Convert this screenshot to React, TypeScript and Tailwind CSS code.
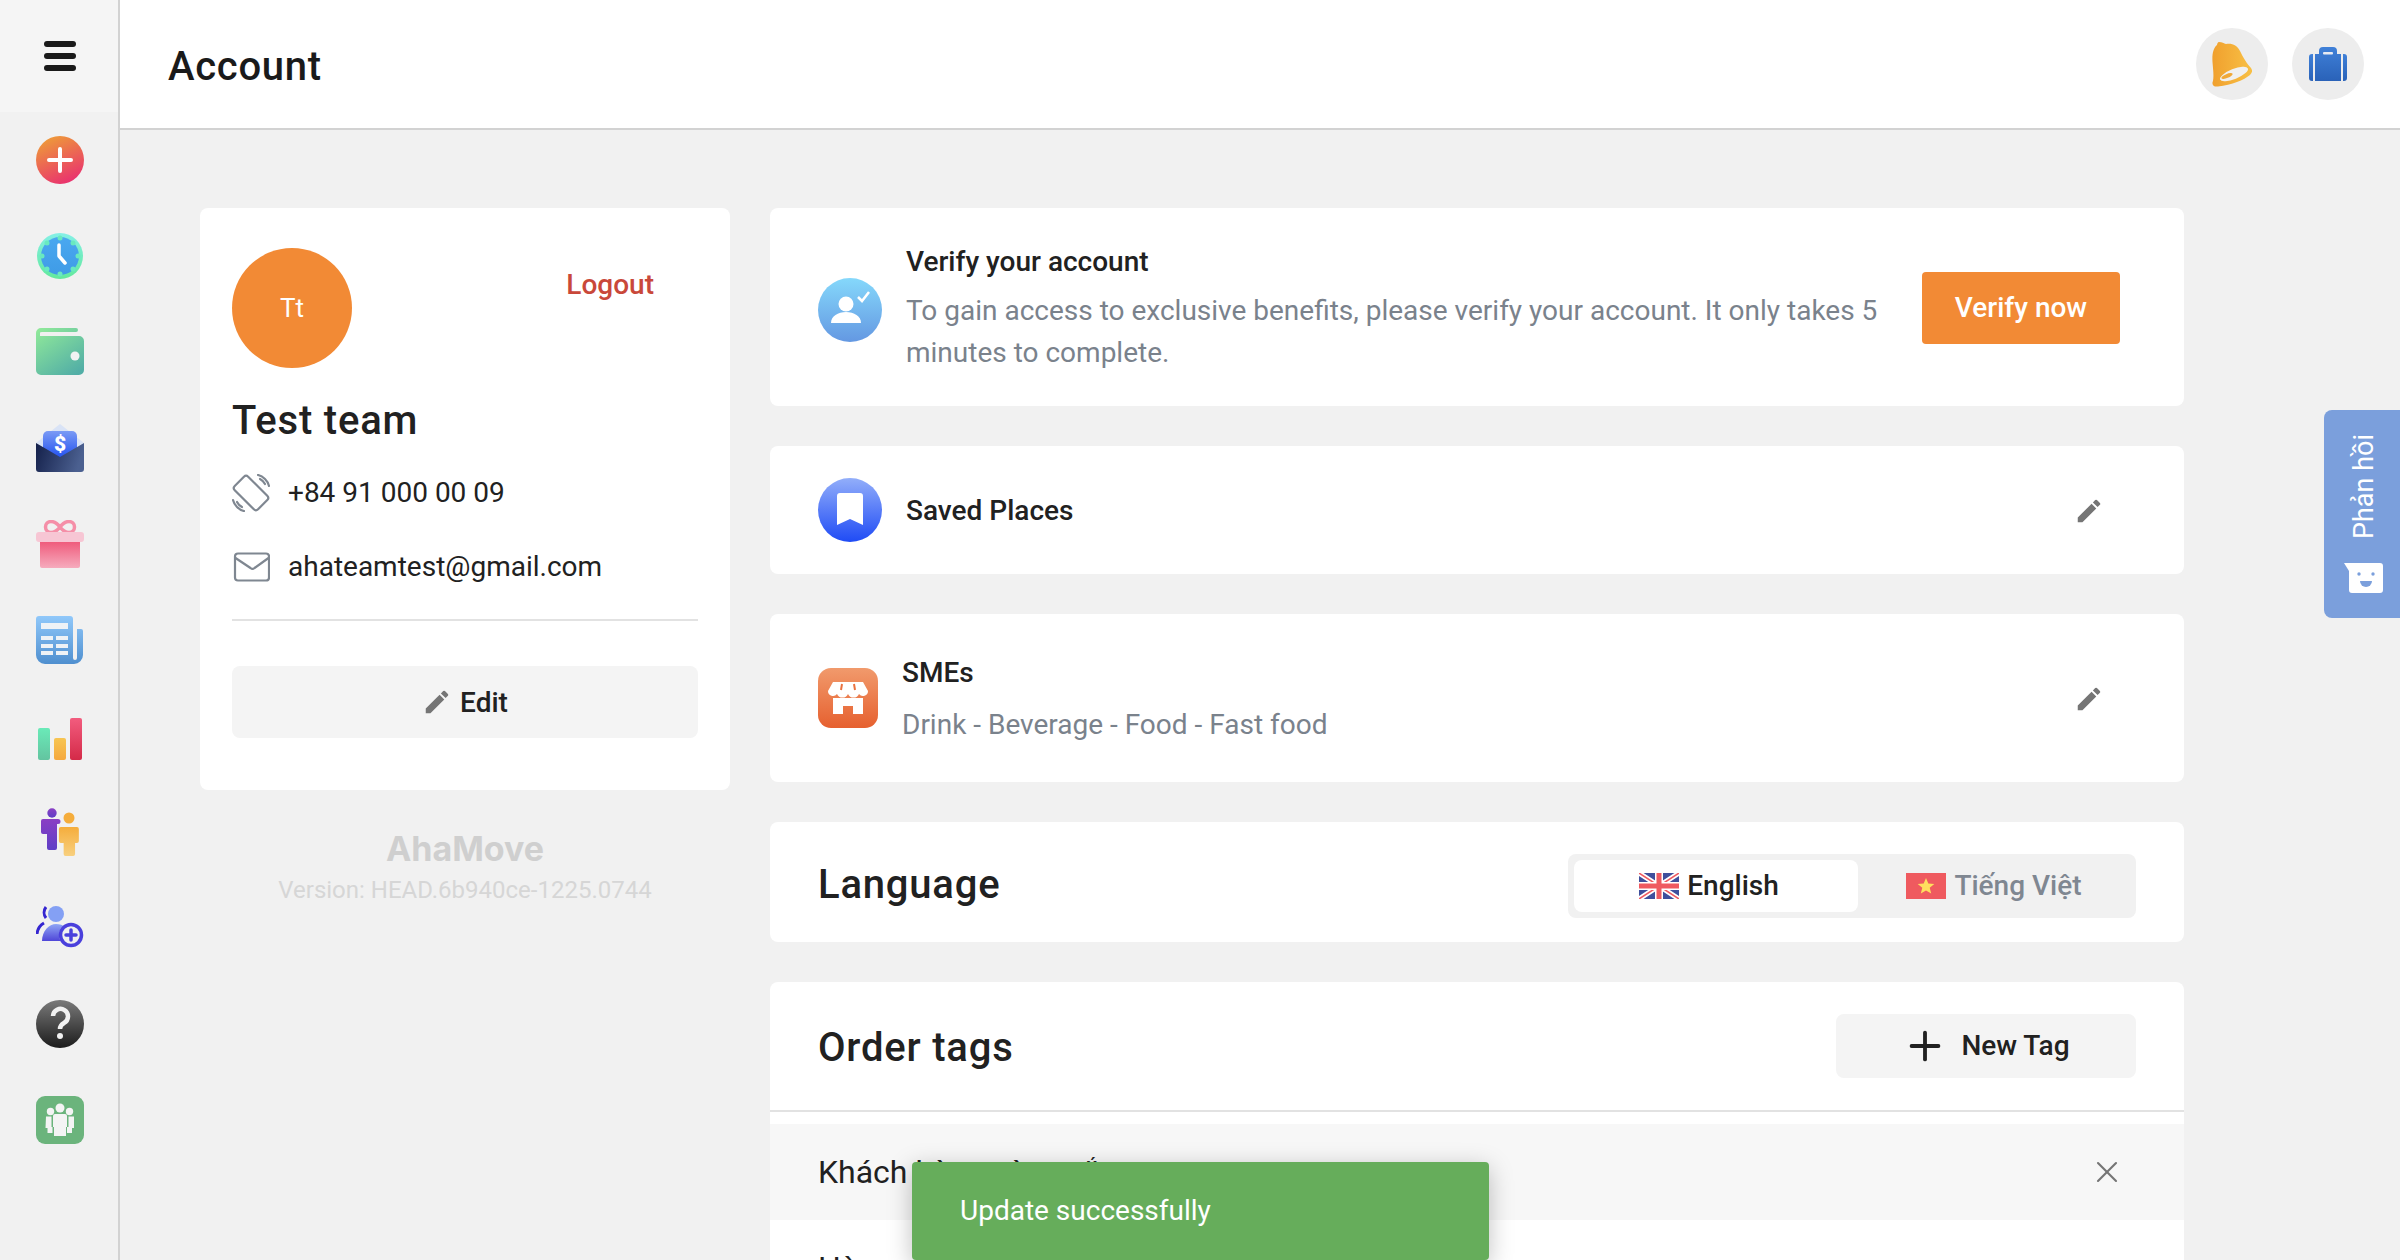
import React from 'react';
import { Plus, X } from 'lucide-react';

const Pencil: React.FC<{ className?: string }> = ({ className }) => (
  <svg viewBox="0 0 24 24" className={className} fill="#757575">
    <path d="M3 17.25V21h3.75L17.81 9.94l-3.75-3.75L3 17.25zM20.71 7.04a1 1 0 0 0 0-1.41l-2.34-2.34a1 1 0 0 0-1.41 0l-1.83 1.83 3.75 3.75 1.83-1.83z" />
  </svg>
);

const Grad: React.FC<{ id: string; from: string; to: string; x2?: number; y2?: number; x1?: number }> = ({
  id,
  from,
  to,
  x1 = 0,
  x2 = 0,
  y2 = 1,
}) => (
  <linearGradient id={id} x1={x1} y1="0" x2={x2} y2={y2}>
    <stop offset="0" stopColor={from} />
    <stop offset="1" stopColor={to} />
  </linearGradient>
);

const sidebarIcons: React.ReactNode[] = [
  <>
    <Grad id="s1" from="#ee9c38" to="#e92f70" x1={0.25} x2={0.7} />
    <circle cx="24" cy="24" r="24" fill="url(#s1)" />
    <path d="M24 13v22M13 24h22" stroke="#fff" strokeWidth="4" strokeLinecap="round" />
  </>,
  <>
    <Grad id="s2a" from="#85f0e6" to="#62e99c" />
    <Grad id="s2b" from="#4aa8f0" to="#3f9be6" />
    <circle cx="24" cy="24" r="23" fill="url(#s2a)" />
    <circle cx="24" cy="24" r="19" fill="url(#s2b)" />
    <g fill="#69e9c0">
      <circle cx="24" cy="6" r="2.5" />
      <circle cx="24" cy="42" r="2.5" />
      <circle cx="6" cy="24" r="2.5" />
      <circle cx="42" cy="24" r="2.5" />
      <circle cx="11" cy="11" r="2.5" />
      <circle cx="37" cy="11" r="2.5" />
      <circle cx="11" cy="37" r="2.5" />
      <circle cx="37" cy="37" r="2.5" />
    </g>
    <path d="M23 13v11l6 7" stroke="#fff" strokeWidth="3.5" strokeLinecap="round" strokeLinejoin="round" fill="none" />
  </>,
  <>
    <Grad id="s3" from="#8fe89a" to="#52aea6" x1={0.1} x2={0.8} />
    <path d="M0 5a5 5 0 0 1 5-5h35a2 2 0 0 1 0 4H6a2 2 0 0 0-2 2v2h39a5 5 0 0 1 5 5v29a5 5 0 0 1-5 5H5a5 5 0 0 1-5-5z" fill="url(#s3)" />
    <path d="M4 4.500h36v3.500H4z" fill="#f0f0f0" />
    <circle cx="39" cy="28" r="4.500" fill="#f2f2f2" />
  </>,
  <>
    <Grad id="s4a" from="#7b9bf5" to="#1f4ff0" />
    <Grad id="s4b" from="#14204a" to="#4b6090" x2={1} y2={0.2} />
    <path d="M0 19 24 0l24 19-24 16z" fill="#d9e3f6" />
    <rect x="7" y="7" width="34" height="28" rx="5" fill="url(#s4a)" />
    <path d="M0 19l24 14 24-14v26a3 3 0 0 1-3 3H3a3 3 0 0 1-3-3z" fill="url(#s4b)" />
    <text x="24" y="27" textAnchor="middle" fontFamily="Roboto, sans-serif" fontWeight="900" fontSize="21" fill="#fff">$</text>
  </>,
  <>
    <Grad id="s5" from="#ef5c7c" to="#f6abbd" />
    <path d="M24 7c-3-4-6-5.500-9-5.500a5.500 5.500 0 0 0 0 11c3 0 6-1.500 9-5.500 3 4 6 5.500 9 5.500a5.500 5.500 0 0 0 0-11c-3 0-6 1.500-9 5.500z" fill="none" stroke="#f58fa8" strokeWidth="3.500" />
    <rect x="0" y="12" width="48" height="10" rx="3" fill="#f7c6d4" />
    <path d="M4 22h40v24a2 2 0 0 1-2 2H6a2 2 0 0 1-2-2z" fill="url(#s5)" />
  </>,
  <>
    <Grad id="s6" from="#90c8fa" to="#4f8fcf" />
    <path d="M3 0h31a3 3 0 0 1 3 3v39a2 2 0 0 0 4 0V13h4a2 2 0 0 1 2 2v24a9 9 0 0 1-9 9H9a9 9 0 0 1-9-9V3a3 3 0 0 1 3-3z" fill="url(#s6)" />
    <g fill="#eef2f6">
      <rect x="5" y="7" width="27" height="6" />
      <rect x="5" y="20" width="12" height="4" />
      <rect x="20" y="20" width="12" height="4" />
      <rect x="5" y="28" width="12" height="4" />
      <rect x="20" y="28" width="12" height="4" />
      <rect x="5" y="35" width="12" height="4" />
      <rect x="20" y="35" width="12" height="4" />
    </g>
  </>,
  <>
    <Grad id="s7a" from="#6aeab8" to="#63c4a0" />
    <Grad id="s7b" from="#f7c552" to="#f5a83e" />
    <Grad id="s7c" from="#f25c7e" to="#d42a48" />
    <rect x="2" y="16" width="12" height="32" rx="2" fill="url(#s7a)" />
    <rect x="18" y="26" width="12" height="22" rx="2" fill="url(#s7b)" />
    <rect x="34" y="6" width="12" height="42" rx="2" fill="url(#s7c)" />
  </>,
  <>
    <Grad id="s8a" from="#8a3fc4" to="#5f3ec6" />
    <Grad id="s8b" from="#f5ad3c" to="#f8d07f" />
    <circle cx="16" cy="5" r="4.700" fill="url(#s8a)" />
    <path d="M7 11h15a2 2 0 0 1 0 5h-1v24a2 2 0 0 1-2 2h-6a2 2 0 0 1-2-2V26H7a2 2 0 0 1-2-2V13a2 2 0 0 1 2-2z" fill="url(#s8a)" />
    <circle cx="33" cy="10" r="5.500" fill="#f5ad3c" />
    <path d="M24 19h17a2 2 0 0 1 2 2v12a2 2 0 0 1-2 2h-2v11a2 2 0 0 1-2 2h-8a2 2 0 0 1-2-2V35h-3a2 2 0 0 1-2-2V21a2 2 0 0 1 2-2z" fill="url(#s8b)" transform="translate(2 0) scale(.95 1)" />
  </>,
  <>
    <Grad id="s9a" from="#8fa6f5" to="#4f46d8" />
    <circle cx="20" cy="10" r="8" fill="#84a0f4" />
    <path d="M10 3a9 9 0 0 0 0 11" stroke="#3526d0" strokeWidth="3" fill="none" />
    <path d="M8 19a14 14 0 0 0-7 11" stroke="#3526d0" strokeWidth="3" fill="none" />
    <path d="M6 37c0-10 7-17 14-17 7 0 14 4 14 17z" fill="url(#s9a)" />
    <circle cx="35" cy="31" r="12" fill="#f0f0f0" />
    <circle cx="35" cy="31" r="10.500" fill="none" stroke="#4a40dc" strokeWidth="3.500" />
    <path d="M35 26v10M30 31h10" stroke="#4a40dc" strokeWidth="3.500" strokeLinecap="round" />
  </>,
  <>
    <Grad id="s10" from="#7a7a7a" to="#1c1c1c" />
    <circle cx="24" cy="24" r="24" fill="url(#s10)" />
    <path d="M17 16a7.500 7.500 0 1 1 11 7c-2.500 1.400-4 2.800-4 6" stroke="#f2f2f2" strokeWidth="4.500" fill="none" />
    <circle cx="24" cy="36" r="3" fill="#f2f2f2" />
  </>,
  <>
    <rect width="48" height="48" rx="9" fill="#6bb47c" />
    <g fill="#f4f4f4">
      <circle cx="24" cy="12" r="4.500" />
      <circle cx="14.500" cy="15.500" r="3.700" />
      <circle cx="33.500" cy="15.500" r="3.700" />
      <path d="M19 18h10a2 2 0 0 1 2 2v11h-1v9H18v-9h-1V20a2 2 0 0 1 2-2z" />
      <path d="M10 20.500h5.500V31h1v6h-5v-5h-2z" />
      <path d="M32.500 20.500H38V32h-2v5h-5v-6h1.500z" />
    </g>
  </>,
];

const Sidebar = () => (
  <div className="w-[120px] shrink-0 border-r-2 border-[#d2d2d2] bg-[#f1f1f1]">
    <div className="h-[112px] bg-[#f5f5f5] flex flex-col items-center justify-center gap-[6px] pl-[2px]">
      <div className="w-[32px] h-[6px] rounded-full bg-[#1a1a1a]" />
      <div className="w-[32px] h-[6px] rounded-full bg-[#1a1a1a]" />
      <div className="w-[32px] h-[6px] rounded-full bg-[#1a1a1a]" />
    </div>
    {sidebarIcons.map((icon, i) => (
      <div key={i} className="h-[96px] flex items-center justify-center pl-[2px]">
        <svg viewBox="0 0 48 48" className="w-[48px] h-[48px]">
          {icon}
        </svg>
      </div>
    ))}
  </div>
);

const Header = () => (
  <div className="h-[130px] shrink-0 bg-white border-b-2 border-[#d2d2d2] flex items-center justify-between pl-[48px] pr-[36px]">
    <h1 className="text-[40px] font-medium tracking-[0.7px] text-[#1a1a1a] mt-[6px]">Account</h1>
    <div className="flex gap-[24px]">
      <div className="w-[72px] h-[72px] rounded-full bg-[#ededed] flex items-center justify-center">
        <svg viewBox="0 0 40 45" className="w-[40px] h-[45px]">
          <Grad id="bell" from="#f0a02e" to="#f8c045" x2={1} y2={0} />
          <path d="M7 0C10 0 12 1.500 14 2C20 1 25 3 28 9C31 15 35 22 39 26C41 29 40 31 38 33C32 38 20 43 6 44.500C1 45-.5 42 1 39C2 33 1 27 .5 20C0 13 1 6 5 3C5 1.500 6 0 7 0z" fill="url(#bell)" />
          <ellipse cx="22" cy="32" rx="15" ry="5" transform="rotate(-22 22 32)" fill="#f0f0f0" />
          <ellipse cx="15" cy="34" rx="6" ry="2" transform="rotate(-22 15 34)" fill="#f0a838" />
        </svg>
      </div>
      <div className="w-[72px] h-[72px] rounded-full bg-[#ededed] flex items-center justify-center">
        <svg viewBox="0 0 38 34" className="w-[38px] h-[34px]">
          <Grad id="bag" from="#3f80d8" to="#2a62b8" />
          <path d="M10 7V4a4 4 0 0 1 4-4h10a4 4 0 0 1 4 4v3h4v27H6V7z" fill="url(#bag)" />
          <rect x="14" y="5" width="10" height="2.500" rx="1" fill="#e6eaf2" />
          <path d="M3 7h1v27H3a3 3 0 0 1-3-3V10a3 3 0 0 1 3-3zM34 7h1a3 3 0 0 1 3 3v21a3 3 0 0 1-3 3h-1z" fill="url(#bag)" />
        </svg>
      </div>
    </div>
  </div>
);

const ProfileCard = () => (
  <div className="w-[530px] shrink-0">
    <div className="bg-white rounded-lg h-[582px] px-[32px] pt-[40px]">
      <div className="flex justify-between">
        <div className="w-[120px] h-[120px] rounded-full bg-[#f28a35] flex items-center justify-center text-white text-[26px]">
          Tt
        </div>
        <span className="text-[28px] font-medium text-[#c9483a] mr-[44px] mt-[16px] leading-[42px]">Logout</span>
      </div>
      <h2 className="mt-[32px] text-[40px] leading-[42px] font-medium tracking-[0.8px] text-[#212121]">Test team</h2>
      <div className="mt-[31px] flex items-center gap-[18px] h-[40px] text-[28px] text-[#212121]">
        <svg viewBox="0 0 38 38" className="w-[38px] h-[38px]" fill="none" stroke="#7f8791" strokeWidth="2.200" strokeLinecap="round">
          <rect x="9.500" y="2.500" width="19" height="33" rx="3" transform="rotate(-45 19 19)" />
          <path d="M26 1c5 1 10 6 11 11M28 5c2 1 4 3 5 5M1 26c1 5 6 10 11 11M5 28c1 2 3 4 5 5" />
        </svg>
        <span>+84 91 000 00 09</span>
      </div>
      <div className="mt-[34px] flex items-center gap-[18px] h-[40px] text-[28px] text-[#212121]">
        <svg viewBox="0 0 38 30" className="w-[38px] h-[30px]" fill="none" stroke="#7f8791" strokeWidth="2.200" strokeLinejoin="round">
          <rect x="3" y="1.500" width="34" height="27" rx="3" />
          <path d="M3.500 6l15 10a3 3 0 0 0 4 0l14-10" />
        </svg>
        <span>ahateamtest@gmail.com</span>
      </div>
      <div className="mt-[32px] border-t-2 border-[#e2e2e2]" />
      <div className="mt-[45px] h-[72px] rounded-lg bg-[#f4f4f4] flex items-center justify-center gap-[8px] text-[28px] font-medium text-[#212121]">
        <Pencil className="w-[30px] h-[30px]" />
        <span className="mt-[1px]">Edit</span>
      </div>
    </div>
    <div className="mt-[40px] text-center text-[34px] leading-[38px] font-bold text-[#cfcfcf] [font-family:Inter,sans-serif]">
      AhaMove
    </div>
    <div className="mt-[6px] text-center text-[24px] leading-[32px] text-[#d6d6d6]">Version: HEAD.6b940ce-1225.0744</div>
  </div>
);

const UkFlag = () => (
  <svg viewBox="0 0 40 26" className="w-[40px] h-[26px]">
    <rect width="40" height="26" fill="#3f4f9c" />
    <path d="M0 0l40 26M40 0L0 26" stroke="#fff" strokeWidth="5" />
    <path d="M0 0l40 26M40 0L0 26" stroke="#ef5a60" strokeWidth="1.500" />
    <path d="M20 0v26M0 13h40" stroke="#fff" strokeWidth="8" />
    <path d="M20 0v26M0 13h40" stroke="#ef5a60" strokeWidth="5" />
  </svg>
);

const VnFlag = () => (
  <svg viewBox="0 0 40 26" className="w-[40px] h-[26px]">
    <rect width="40" height="26" fill="#ef5a5f" />
    <path d="M20 5l2.300 5.500 6 .4-4.600 3.800 1.500 5.800-5.200-3.100-5.200 3.100 1.500-5.800-4.600-3.800 6-.4z" fill="#ffdf5e" />
  </svg>
);

const AccountColumn = () => (
  <div className="w-[1414px] shrink-0 flex flex-col gap-[40px]">
    <div className="h-[198px] bg-white rounded-lg flex items-center pl-[48px] pr-[64px] shrink-0">
      <svg viewBox="0 0 64 64" className="w-[64px] h-[64px] shrink-0 mt-[6px]">
        <Grad id="v1" from="#85d8fb" to="#6498e2" />
        <circle cx="32" cy="32" r="32" fill="url(#v1)" />
        <circle cx="28" cy="26" r="7.500" fill="#fff" />
        <path d="M13 45c0-7 7-11 15-11s15 4 15 11z" fill="#fff" />
        <path d="M40 19l4 4 7-9" stroke="#fff" strokeWidth="2.500" fill="none" />
      </svg>
      <div className="ml-[24px] w-[985px] shrink-0">
        <div className="text-[28px] leading-[42px] font-medium text-[#212121]">Verify your account</div>
        <p className="text-[28px] leading-[42px] text-[#7a828c] mt-[7px]">
          To gain access to exclusive benefits, please verify your account. It only takes 5 minutes to complete.
        </p>
      </div>
      <button className="ml-auto w-[198px] h-[72px] rounded bg-[#f28a35] text-white text-[28px] font-medium mt-[2px]">
        Verify now
      </button>
    </div>

    <div className="h-[128px] bg-white rounded-lg flex items-center pl-[48px] pr-[80px] shrink-0">
      <svg viewBox="0 0 64 64" className="w-[64px] h-[64px] shrink-0">
        <Grad id="v2" from="#92aefa" to="#1f4bf5" />
        <circle cx="32" cy="32" r="32" fill="url(#v2)" />
        <path d="M19 18a3 3 0 0 1 3-3h20a3 3 0 0 1 3 3v29l-13-6-13 6z" fill="#fff" />
      </svg>
      <span className="ml-[24px] mt-[2px] text-[28px] font-medium text-[#212121]">Saved Places</span>
      <Pencil className="ml-auto mt-[2px] w-[30px] h-[30px]" />
    </div>

    <div className="h-[168px] bg-white rounded-lg flex items-center pl-[48px] pr-[80px] shrink-0">
      <svg viewBox="0 0 60 60" className="w-[60px] h-[60px] shrink-0">
        <Grad id="v3" from="#f19a6c" to="#e6602f" />
        <rect width="60" height="60" rx="13" fill="url(#v3)" />
        <path d="M15 14h30l5 9a5 5 0 0 1-9 3 6 6 0 0 1-11 0 6 6 0 0 1-11 0 5 5 0 0 1-9-3z" fill="#fff" />
        <path d="M15 30h30v16H35v-8H25v8H15z" fill="#fff" />
        <path d="M24 16l-1 6M36 16l1 6" stroke="#ea7240" strokeWidth="2" />
      </svg>
      <div className="ml-[24px] mt-[2px] text-[28px]">
        <div className="leading-[42px] font-medium text-[#212121]">SMEs</div>
        <div className="leading-[42px] mt-[10px] text-[#7a828c]">Drink - Beverage - Food - Fast food</div>
      </div>
      <Pencil className="ml-auto mt-[1px] w-[30px] h-[30px]" />
    </div>

    <div className="h-[120px] bg-white rounded-lg flex items-center justify-between pl-[48px] pr-[48px] shrink-0">
      <h3 className="text-[40px] font-medium tracking-[0.8px] text-[#212121] mt-[6px]">Language</h3>
      <div className="w-[568px] h-[64px] rounded-lg bg-[#f1f1f1] p-[6px] flex text-[28px] font-medium mt-[8px]">
        <div className="w-[284px] rounded-lg bg-white flex items-center justify-center gap-[8px] pr-[14px] text-[#212121]">
          <UkFlag />
          English
        </div>
        <div className="flex-1 flex items-center justify-center gap-[8px] text-[#7f8791]">
          <VnFlag />
          Tiếng Việt
        </div>
      </div>
    </div>

    <div className="bg-white rounded-t-lg shrink-0">
      <div className="h-[130px] border-b-2 border-[#e2e2e2] flex items-center justify-between pl-[48px] pr-[48px]">
        <h3 className="text-[40px] font-medium tracking-[0.8px] text-[#212121] mt-[3px]">Order tags</h3>
        <div className="w-[300px] h-[64px] rounded-lg bg-[#f4f4f4] flex items-center justify-center gap-[13px] text-[28px] font-medium text-[#212121]">
          <Plus className="w-[46px] h-[46px]" strokeWidth={2} />
          New Tag
        </div>
      </div>
      <div className="mt-[12px] h-[96px] bg-[#f7f7f7] flex items-center justify-between pl-[48px] pr-[59px] text-[32px] text-[#212121]">
        Khách hàng vừa mắn
        <X className="w-[36px] h-[36px] text-[#757575]" strokeWidth={1.4} />
      </div>
      <div className="h-[96px] flex items-center pl-[48px] text-[32px] text-[#212121]">Hàng mới</div>
    </div>
  </div>
);

export default function App() {
  return (
    <div className="relative h-[1260px] overflow-hidden flex bg-[#f1f1f1] [font-family:Roboto,sans-serif]">
      <Sidebar />
      <div className="flex-1 flex flex-col min-w-0">
        <Header />
        <div className="flex gap-[40px] pl-[80px] pt-[78px]">
          <ProfileCard />
          <AccountColumn />
        </div>
      </div>

      {/* feedback tab */}
      <div className="absolute right-0 top-[410px] w-[76px] h-[208px] rounded-l-lg bg-[#7b9fdc] flex flex-col items-center pt-[24px] pl-[4px]">
        <span className="[writing-mode:vertical-rl] rotate-180 text-[27px] leading-[32px] text-white">Phản hồi</span>
        <svg viewBox="0 0 40 30" className="w-[40px] h-[30px] mt-[24px]">
          <path d="M0 0h36a3 3 0 0 1 3 3v24a3 3 0 0 1-3 3H8a3 3 0 0 1-3-3V8z" fill="#fff" />
          <circle cx="15" cy="11" r="1.700" fill="#7b9fdc" />
          <circle cx="29" cy="11" r="1.700" fill="#7b9fdc" />
          <path d="M16 18h12a6 6 0 0 1-12 0z" fill="#7b9fdc" />
        </svg>
      </div>

      {/* toast */}
      <div className="absolute bottom-0 left-[912px] w-[577px] h-[98px] rounded bg-[#66ad5b] flex items-center pl-[48px] text-[28px] text-white shadow-[0_6px_24px_rgba(0,0,0,0.25)]">
        Update successfully
      </div>
    </div>
  );
}
